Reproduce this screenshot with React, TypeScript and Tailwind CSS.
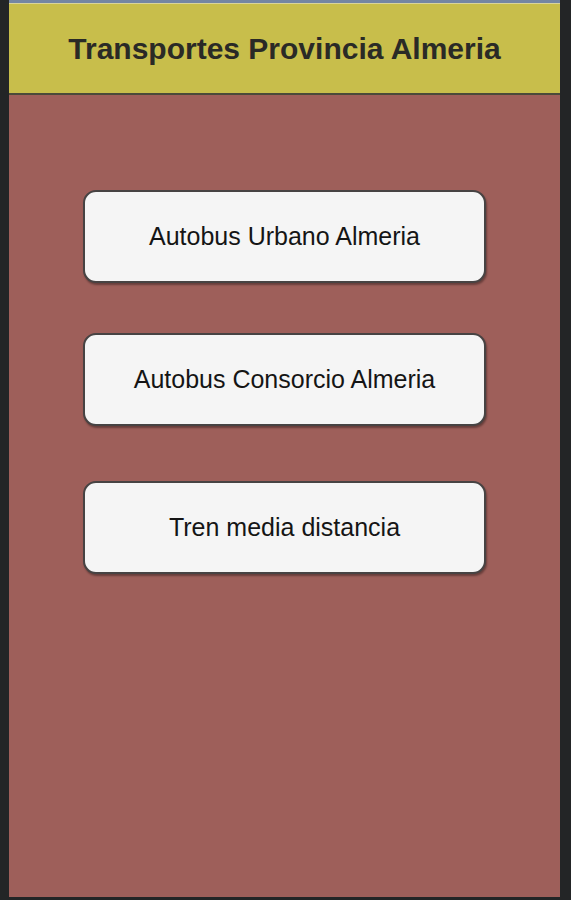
import React from 'react';

const items = ['Autobus Urbano Almeria', 'Autobus Consorcio Almeria', 'Tren media distancia'];

const App: React.FC = () => {
  return (
    <div className="h-[900px] w-full bg-[#232526] pl-[9px] pr-[11px] pb-[3px] font-['Liberation_Sans',Arial,sans-serif]">
      <div className="flex h-full flex-col">
        <div className="h-[3px] bg-[#7486a2]" />
        <div className="h-[1px] bg-[#d9d49a]" />
        <header className="flex h-[89px] items-center justify-center bg-[#c8be4b]">
          <h1 className="text-[30px] font-bold text-[#2a2a26]">Transportes Provincia Almeria</h1>
        </header>
        <div className="h-[2px] bg-[#4a4a3a]" />
        <main className="flex flex-1 flex-col items-center bg-[#9e5f5a] pt-[95px]">
          {items.map((label, i) => (
            <button
              key={label}
              className={`flex h-[93px] w-[403px] items-center justify-center rounded-[13px] border-2 border-[#474343] bg-[#f5f5f5] text-[25px] text-[#151515] shadow-[1px_2px_2px_rgba(0,0,0,0.35)] ${
                i === 1 ? 'mt-[50px]' : i === 2 ? 'mt-[55px]' : ''
              }`}
            >
              {label}
            </button>
          ))}
        </main>
      </div>
    </div>
  );
};

export default App;
